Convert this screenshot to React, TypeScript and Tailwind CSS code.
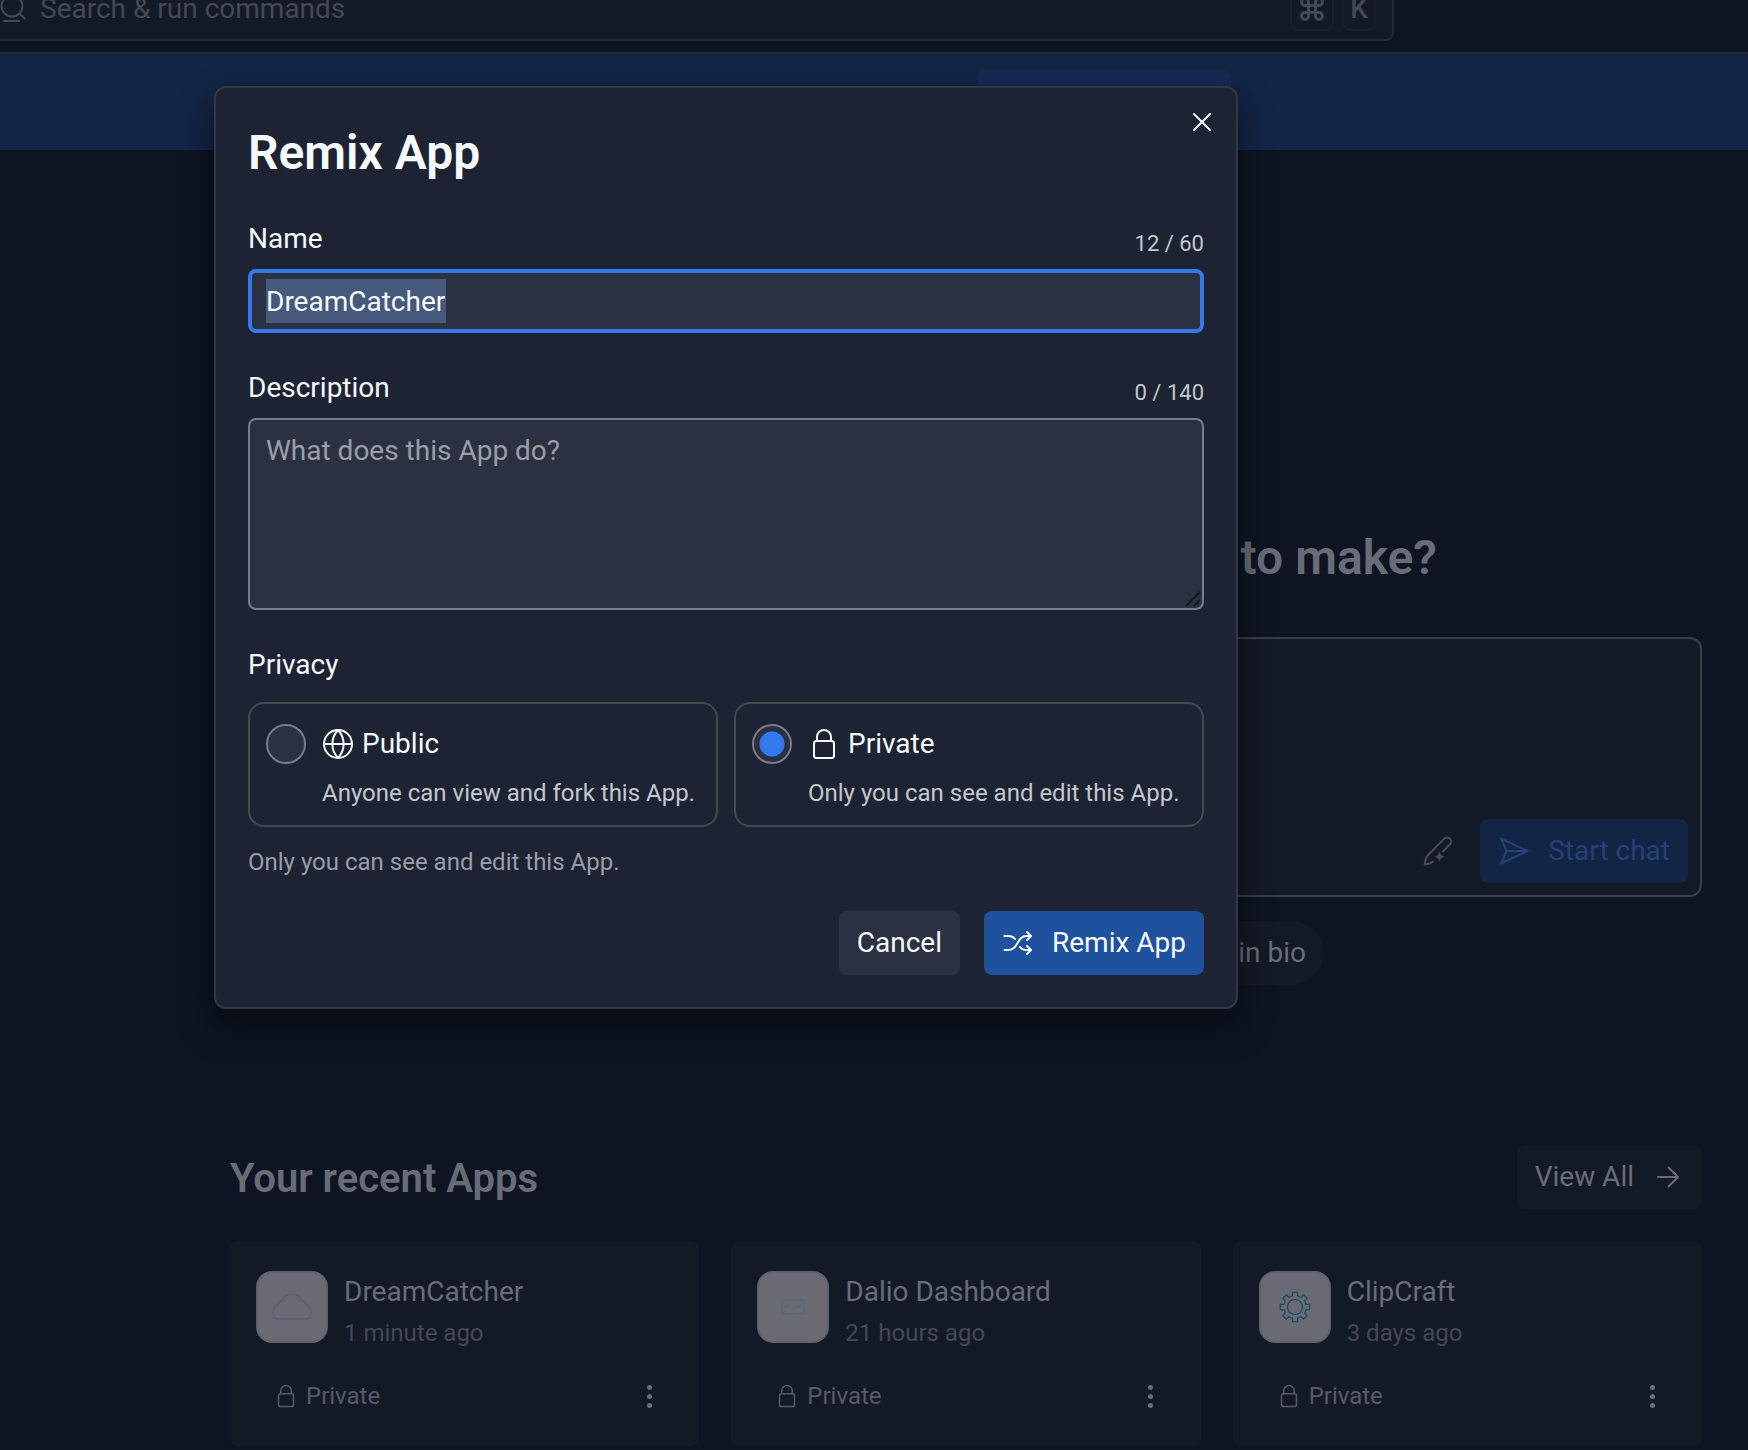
import { useEffect, useRef, useState } from "react";
import type { ReactNode } from "react";
import { Command } from "lucide-react";

function Svg({ className, children, width = 1.5 }: { className: string; children: ReactNode; width?: number }) {
  return (
    <svg
      viewBox="0 0 32 32"
      className={className}
      fill="none"
      stroke="currentColor"
      strokeWidth={width}
      strokeLinecap="round"
      strokeLinejoin="round"
      aria-hidden="true"
    >
      {children}
    </svg>
  );
}

function LockIcon({ className, width = 2 }: { className: string; width?: number }) {
  return (
    <Svg className={className} width={width}>
      <rect x="6" y="13" width="20" height="17" rx="2.5" />
      <path d="M9 13V9a7 7 0 0 1 14 0v4" />
    </Svg>
  );
}

function GlobeIcon() {
  return (
    <Svg className="size-8 shrink-0" width={2}>
      <circle cx="16" cy="16" r="14" />
      <path d="M2 16h28M16 2c-7.5 8-7.5 20 0 28M16 2c7.5 8 7.5 20 0 28" />
    </Svg>
  );
}

function ShuffleIcon() {
  return (
    <Svg className="size-8 shrink-0" width={2}>
      <path d="M2.500 9h4c3 0 5 1 6.500 3" />
      <path d="M2.500 23h4c10 0 8-14 18-14h4.500" />
      <path d="M25 5l4 4-4 4" />
      <path d="M18 20c1.500 2 3.500 3 6 3h5" />
      <path d="M25 19l4 4-4 4" />
    </Svg>
  );
}

function SendIcon() {
  return (
    <Svg className="size-8 shrink-0" width={2}>
      <path d="M3 3.500l26.500 12.500L3 28.500l5.500-12.500z" />
      <path d="M8.500 16h21" />
    </Svg>
  );
}

function PencilIcon() {
  return (
    <Svg className="size-8" width={2}>
      <path d="M21 16.500l7-7.200a4 4 0 0 0-5.700-5.700L6.500 19.500C3.800 22.500 3 26 2.600 29.600c3.400-.3 6-.9 8.400-3" />
      <path
        d="M17.500 16c.8 3.600 1.900 4.900 5.500 5.700-3.600.8-4.700 2-5.500 5.600-.8-3.600-1.900-4.800-5.500-5.600 3.600-.8 4.700-2.100 5.500-5.700z"
        fill="currentColor"
        stroke="none"
      />
    </Svg>
  );
}

function CloudIcon() {
  return (
    <svg viewBox="0 0 44 32" className="w-11 text-[#605c75]" fill="none" stroke="currentColor" strokeWidth="1.500" aria-hidden="true">
      <path d="M9 28c-4 0-6-3-6-6.500S5 15.500 8 14c.5-3 2.500-4 4.500-4.500C14.500 5.500 18 3 22 3s7.500 2.500 9.500 6.500c2 .5 4 1.500 4.500 4.500 3 1.500 5 4 5 7.500S39 28 35 28z" />
    </svg>
  );
}

function FaceIcon() {
  return (
    <svg viewBox="0 0 24 16" className="w-6 text-[#4c6877]" fill="none" stroke="currentColor" strokeWidth="1" aria-hidden="true">
      <rect x="1" y="1" width="22" height="14" rx="3" />
      <path d="M4.500 6v1.500h3V6M16.500 6v1.500h3V6M11 8.500h2" />
    </svg>
  );
}

function GearIcon() {
  const teeth = Array.from({ length: 8 }, (_, i) => {
    const at = (deg: number, r: number) => {
      const a = ((i * 45 + deg - 90) * Math.PI) / 180;
      return `${(16 + r * Math.cos(a)).toFixed(2)} ${(16 + r * Math.sin(a)).toFixed(2)}`;
    };
    return `${at(-13, 11.5)}L${at(-10, 15)}L${at(10, 15)}L${at(13, 11.5)}`;
  });
  return (
    <svg viewBox="0 0 32 32" className="w-8 text-[#174a60]" fill="none" stroke="currentColor" strokeWidth="1.200" strokeLinejoin="round" aria-hidden="true">
      <path d={`M${teeth.join("L")}Z`} />
      <circle cx="16" cy="16" r="7.500" />
    </svg>
  );
}

const apps = [
  { name: "DreamCatcher", time: "1 minute ago", icon: <CloudIcon /> },
  { name: "Dalio Dashboard", time: "21 hours ago", icon: <FaceIcon /> },
  { name: "ClipCraft", time: "3 days ago", icon: <GearIcon /> },
];

function AppCard({ name, time, icon }: { name: string; time: string; icon: ReactNode }) {
  return (
    <article className="min-w-0 rounded-lg bg-[#141926] px-[26px] pt-[30px] pb-[26px]">
      <div className="flex items-start gap-4">
        <div className="flex size-[72px] items-center justify-center rounded-2xl border-2 border-[#5f616c] bg-[#696a74]">
          {icon}
        </div>
        <div>
          <h3 className="text-[28px] leading-[42px] text-[#696c76]">{name}</h3>
          <p className="text-2xl leading-10 text-[#444853]">{time}</p>
        </div>
      </div>
      <div className="mt-[19px] flex h-12 items-center justify-between pr-2 pl-[18px]">
        <span className="flex items-center gap-2 text-2xl leading-8 text-[#575a65]">
          <LockIcon className="size-6" width={2} />
          Private
        </span>
        <button type="button" aria-label={`More actions for ${name}`} className="flex size-8 flex-col items-center justify-center gap-1 text-[#696c76]">
          <span className="size-[5px] rounded-full bg-current" />
          <span className="size-[5px] rounded-full bg-current" />
          <span className="size-[5px] rounded-full bg-current" />
        </button>
      </div>
    </article>
  );
}

function PrivacyOption({
  value,
  label,
  note,
  icon,
  checked,
  onSelect,
}: {
  value: string;
  label: string;
  note: string;
  icon: ReactNode;
  checked: boolean;
  onSelect: () => void;
}) {
  return (
    <label className="flex flex-1 items-start gap-4 rounded-2xl border-2 border-[#46484f] px-4 pt-5 pb-[15px]">
      <input
        type="radio"
        name="privacy"
        value={value}
        checked={checked}
        onChange={onSelect}
        className="size-10 shrink-0 appearance-none rounded-full border-2 border-[#7a7c8b] bg-[#2c3142] bg-clip-padding checked:bg-[radial-gradient(circle,#3478ee_12px,transparent_13px)]"
      />
      <span className="flex flex-col gap-[13px]">
        <span className="flex h-10 items-center gap-2 text-[28px] leading-10 text-[#f5f9fc]">
          {icon}
          {label}
        </span>
        <span className="text-2xl leading-[33px] whitespace-nowrap text-[#c2c8cc]">{note}</span>
      </span>
    </label>
  );
}

const initialName = "DreamCatcher";

function RemixDialog() {
  const [name, setName] = useState(initialName);
  const [highlighted, setHighlighted] = useState(true);
  const [description, setDescription] = useState("");
  const [privacy, setPrivacy] = useState("private");
  const nameRef = useRef<HTMLInputElement>(null);

  useEffect(() => {
    nameRef.current?.focus();
    nameRef.current?.select();
  }, []);

  return (
    <form
      role="dialog"
      aria-labelledby="dialog-title"
      onSubmit={(e) => e.preventDefault()}
      className="relative w-full max-w-[1024px] rounded-xl border-2 border-[#34373f] bg-[#1d2332] p-8 text-[#f5f9fc] shadow-[0_16px_32px_rgba(4,6,14,0.6)]"
    >
      <button type="button" aria-label="Close" className="absolute top-[18px] right-[18px]">
        <Svg className="size-8" width={2}>
          <path d="M8 8l16 16M24 8L8 24" />
        </Svg>
      </button>
      <h1 id="dialog-title" className="text-5xl leading-[66px] font-semibold">
        Remix App
      </h1>
      <div className="mt-[33px] flex items-end justify-between">
        <label htmlFor="name" className="text-[28px] leading-10">Name</label>
        <span className="text-[22px] leading-[30px] text-[#c2c8cc]">{name.length} / 60</span>
      </div>
      <input
        id="name"
        ref={nameRef}
        value={name}
        maxLength={60}
        onChange={(e) => {
          setName(e.target.value);
          setHighlighted(false);
        }}
        onSelect={(e) => {
          const { value, selectionStart, selectionEnd } = e.currentTarget;
          setHighlighted(value === initialName && selectionStart === 0 && selectionEnd === value.length);
        }}
        className={`mt-2.5 block h-16 w-full rounded-lg border-4 border-[#3478ee] bg-[#2c3142] px-[14px] text-[28px] leading-[44px] outline-none selection:bg-[#44597b] selection:text-[#f5f9fc] ${
          highlighted
            ? "bg-[linear-gradient(#44597b,#44597b)] bg-[length:180px_44px] bg-[position:14px_center] bg-no-repeat"
            : ""
        }`}
      />
      <div className="mt-[35px] flex items-end justify-between">
        <label htmlFor="description" className="text-[28px] leading-10">Description</label>
        <span className="text-[22px] leading-[30px] text-[#c2c8cc]">{description.length} / 140</span>
      </div>
      <div className="relative mt-2.5">
        <textarea
          id="description"
          value={description}
          maxLength={140}
          onChange={(e) => setDescription(e.target.value)}
          placeholder="What does this App do?"
          className="block h-48 w-full resize-none rounded-lg border-2 border-[#7a7c8b] bg-[#2c3142] px-4 py-[11px] text-[28px] leading-10 outline-none placeholder:text-[#9b9ea6]"
        />
        <svg viewBox="0 0 16 16" className="pointer-events-none absolute right-[3px] bottom-[3px] size-4 text-[#15181f]" stroke="currentColor" strokeWidth="2" aria-hidden="true">
          <path d="M1 15L15 1M9 15l6-6" />
        </svg>
      </div>
      <fieldset className="mt-[35px]">
        <legend className="text-[28px] leading-10">Privacy</legend>
        <div className="mt-[17px] flex gap-4">
          <PrivacyOption
            value="public"
            label="Public"
            note="Anyone can view and fork this App."
            icon={<GlobeIcon />}
            checked={privacy === "public"}
            onSelect={() => setPrivacy("public")}
          />
          <PrivacyOption
            value="private"
            label="Private"
            note="Only you can see and edit this App."
            icon={<LockIcon className="size-8 shrink-0" />}
            checked={privacy === "private"}
            onSelect={() => setPrivacy("private")}
          />
        </div>
      </fieldset>
      <p className="mt-[19px] text-2xl leading-8 text-[#9b9ea6]">Only you can see and edit this App.</p>
      <div className="mt-[33px] flex justify-end gap-6">
        <button type="button" className="h-16 rounded-lg bg-[#2c3142] px-[18px] text-[28px] leading-10">
          Cancel
        </button>
        <button type="submit" className="flex h-16 items-center gap-[18px] rounded-lg bg-[#20519f] px-[18px] text-[28px] leading-10">
          <ShuffleIcon />
          Remix App
        </button>
      </div>
    </form>
  );
}

export default function App() {
  return (
    <div className="relative h-screen overflow-hidden bg-[#0e1421] font-['Roboto',sans-serif]">
      <header className="flex h-[54px] items-end overflow-hidden border-b-2 border-[#23262f] pr-[354px] pb-[11px]">
        <button type="button" className="flex h-16 w-full shrink-0 items-center gap-3 rounded-r-lg border-2 border-l-0 border-[#242833] bg-[#141926] pr-4 text-[28px] leading-10 text-[#444852]">
          <Svg className="-ml-1 size-8 shrink-0" width={2}>
            <circle cx="16" cy="13" r="10.500" />
            <path d="M23.500 20.500l5 5M8 28h15" />
          </Svg>
          <span className="flex-1 text-left">Search &amp; run commands</span>
          <kbd className="flex h-11 w-11 items-center justify-center rounded-lg border-2 border-[#191e2a]">
            <Command className="size-7" strokeWidth={2.5} />
          </kbd>
          <kbd className="-ml-1 flex h-11 w-[34px] items-center justify-center rounded-lg border-2 border-[#191e2a] font-[Roboto] text-[28px] font-medium">K</kbd>
        </button>
      </header>
      <aside className="flex h-24 bg-[#122545] pt-4 pl-[978px]">
        <button type="button" aria-label="Learn more" className="h-16 w-[253px] rounded-lg bg-[#162951]" />
      </aside>

      <main className="pr-[46px] pl-[230px]">
        <h2 className="pt-[376px] pr-[265px] text-right text-5xl leading-16 font-semibold text-[#696c76]">What do you want to make?</h2>
        <section className="mt-[47px] flex h-[260px] items-end justify-end gap-[26px] rounded-xl border-2 border-[#3a3d4a] bg-[#141926] p-3">
          <button type="button" aria-label="Improve prompt" className="flex h-16 items-center text-[#484b55]">
            <PencilIcon />
          </button>
          <button type="button" className="flex h-16 items-center gap-[18px] rounded-lg bg-[#122545] px-[18px] text-[28px] leading-10 text-[#273f77]">
            <SendIcon />
            Start chat
          </button>
        </section>
        <div className="mt-6 flex justify-end pr-[378px]">
          <button type="button" className="h-16 rounded-full bg-[#141926] px-[18px] text-[28px] leading-10 text-[#696c76]">
            Link in bio
          </button>
        </div>
        <section className="mt-40">
          <div className="flex items-end justify-between">
            <h2 className="text-[40px] leading-[60px] font-semibold text-[#696c76]">Your recent Apps</h2>
            <button type="button" className="flex h-16 items-center gap-[18px] rounded-lg bg-[#141926] px-[18px] text-[28px] leading-10 text-[#696c76]">
              View All
              <Svg className="size-8" width={2}>
                <path d="M6 16h20M16.500 6.500L26 16l-9.500 9.500" />
              </Svg>
            </button>
          </div>
          <div className="mt-8 grid grid-cols-3 gap-8">
            {apps.map((app) => (
              <AppCard key={app.name} {...app} />
            ))}
          </div>
        </section>
      </main>

      <div className="absolute inset-0 flex items-start justify-center pt-[86px] pr-[296px]">
        <RemixDialog />
      </div>
    </div>
  );
}
